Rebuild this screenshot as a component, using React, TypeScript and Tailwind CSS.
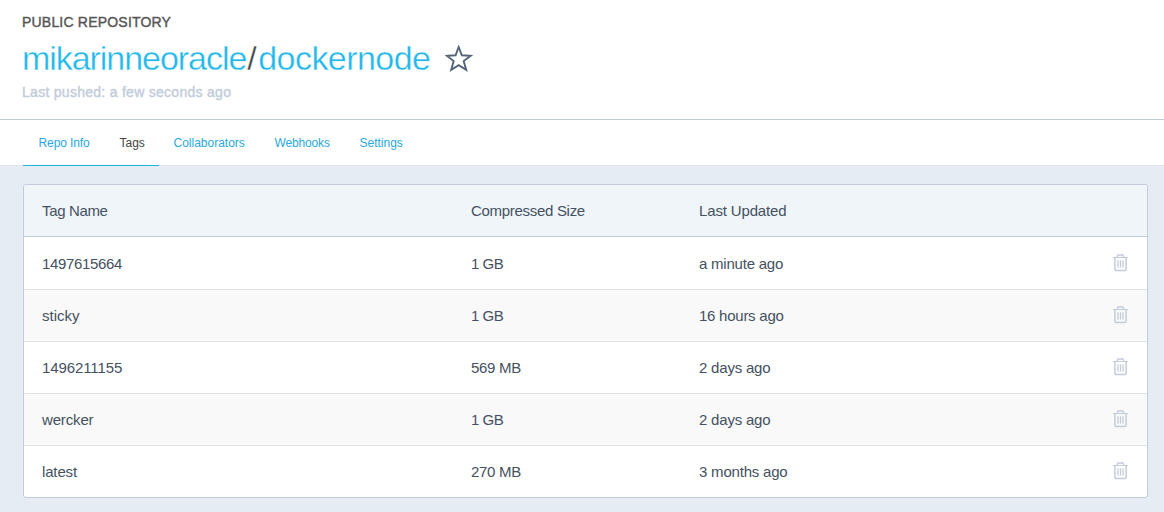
type Row = { name: string; size: string; updated: string; height: string; nameCls: string; sizeCls: string; updatedCls: string };

const rows: Row[] = [
  { name: '1497615664', size: '1 GB', updated: 'a minute ago', height: 'h-[53px] pt-px', nameCls: 'tracking-[-0.35px]', sizeCls: 'tracking-[-0.5px]', updatedCls: 'tracking-[-0.22px]' },
  { name: 'sticky', size: '1 GB', updated: '16 hours ago', height: 'h-[52px]', nameCls: '', sizeCls: 'tracking-[-0.5px]', updatedCls: 'tracking-[-0.25px]' },
  { name: '1496211155', size: '569 MB', updated: '2 days ago', height: 'h-[52px]', nameCls: 'tracking-[-0.1px]', sizeCls: 'tracking-[-0.3px]', updatedCls: 'tracking-[-0.2px]' },
  { name: 'wercker', size: '1 GB', updated: '2 days ago', height: 'h-[52px]', nameCls: 'tracking-[-0.15px]', sizeCls: 'tracking-[-0.5px]', updatedCls: 'tracking-[-0.2px]' },
  { name: 'latest', size: '270 MB', updated: '3 months ago', height: 'h-[51px]', nameCls: 'tracking-[-0.15px]', sizeCls: 'tracking-[-0.3px]', updatedCls: 'tracking-[-0.2px]' },
];

const tabs = [
  { label: 'Repo Info', cls: 'w-[81px] tracking-[-0.1px]' },
  { label: 'Tags', cls: 'w-[54px] text-[#444]' },
  { label: 'Collaborators', cls: 'w-[101px]' },
  { label: 'Webhooks', cls: 'w-[85px] tracking-[-0.15px]' },
  { label: 'Settings', cls: '' },
];

function Star() {
  return (
    <svg className="mt-[3px] ml-[15px]" width="28" height="28" viewBox="0 0 28 28" fill="none" stroke="#556578" strokeWidth="1.9">
      <path d="M13.7 2 L16.8 10.3 L25.6 10.8 L18.7 16.1 L21.2 24.8 L13.7 20.2 L6.2 24.8 L8.7 16.1 L1.8 10.8 L10.6 10.3 Z" />
    </svg>
  );
}

function Trash() {
  return (
    <svg className="-mt-px" width="16" height="18" viewBox="0 0 16 18" fill="none" stroke="#c3ccdb">
      <path d="M0 3.5 H15" strokeWidth="1.2" />
      <path d="M4.5 3 V1.7 Q4.5 1 5.2 1 H9.8 Q10.5 1 10.5 1.7 V3" strokeWidth="1.3" />
      <path d="M1.9 4 V15.2 Q1.9 16.4 3.1 16.4 H11.9 Q13.1 16.4 13.1 15.2 V4" strokeWidth="1.5" />
      <path d="M5 6.3 V13.6 M7.5 6.3 V13.6 M10 6.3 V13.6" strokeWidth="1.3" />
    </svg>
  );
}

export default function App() {
  return (
    <div className="h-[512px] w-full overflow-hidden bg-[#e5ecf4] font-['Liberation_Sans',Arial,sans-serif] text-[#445161]">
      <header className="h-[120px] border-b border-[#c0c9d3] bg-white pl-[22px]">
        <div className="pt-[13px] text-[14px] leading-[18px] tracking-[0.2px] text-[#555] [-webkit-text-stroke:0.4px_#555]">PUBLIC REPOSITORY</div>
        <h1 className="flex h-[51px] items-center pt-[2px] text-[34px] leading-[40px] text-[#22b8eb] [-webkit-text-stroke:0.35px_white]">
          <span className="tracking-[-1.05px]">mikarinneoracle</span>
          <span className="w-[12px] pl-px text-[#444]">/</span>
          <span className="tracking-[-0.55px]">dockernode</span>
          <Star />
        </h1>
        <div className="text-[14px] leading-[20px] tracking-[0.28px] text-[#c2cddb] [-webkit-text-stroke:0.4px_#c2cddb]">Last pushed: a few seconds ago</div>
      </header>
      <nav className="h-[46px] border-b border-[#dfe6ec] bg-white pl-[23px]">
        <div className="flex h-[46px] w-[136px] border-b border-[#22b0dc] pl-[15.5px] text-[12px] leading-[46px] whitespace-nowrap text-[#28a9e0]">
          {tabs.map((t) => (
            <span key={t.label} className={`shrink-0 ${t.cls}`}>{t.label}</span>
          ))}
        </div>
      </nav>
      <main className="pt-[18px] pr-[16px] pl-[23px]">
        <section className="overflow-hidden rounded-[3px] border border-[#c2ccda] bg-white text-[15px] leading-[22px]">
          <div className="grid h-[52px] grid-cols-[429px_228px_1fr] items-center border-b border-[#c2ccda] bg-[#f0f5fa] pt-px pl-[18px]">
            <span className="tracking-[-0.35px]">Tag Name</span>
            <span className="tracking-[-0.3px]">Compressed Size</span>
            <span className="tracking-[-0.15px]">Last Updated</span>
          </div>
          {rows.map((r) => (
            <div key={r.name} className={`grid grid-cols-[429px_228px_1fr_34px] items-center border-b border-[#e0e3e6] pl-[18px] last:border-b-0 odd:bg-[#f9f9f9] ${r.height}`}>
              <span className={r.nameCls}>{r.name}</span>
              <span className={r.sizeCls}>{r.size}</span>
              <span className={r.updatedCls}>{r.updated}</span>
              <Trash />
            </div>
          ))}
        </section>
      </main>
    </div>
  );
}
